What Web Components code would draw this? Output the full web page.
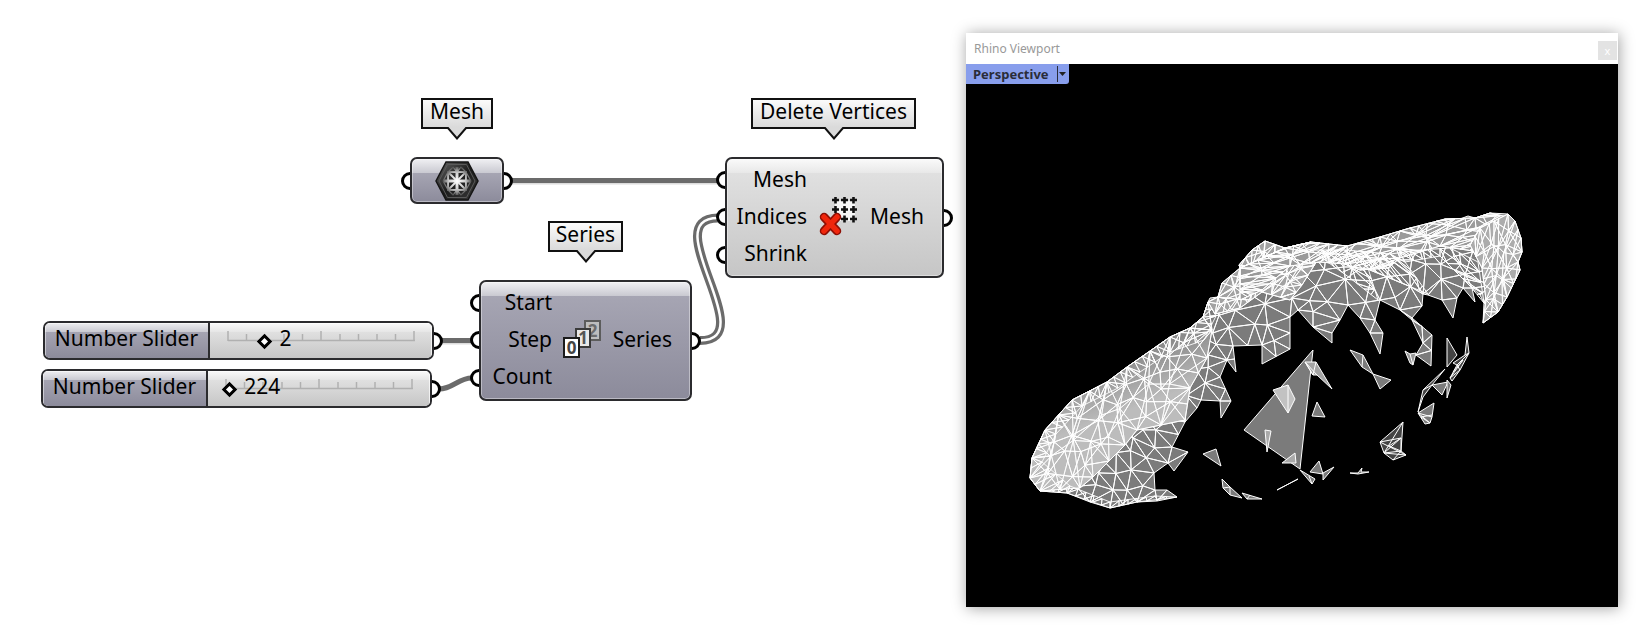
<!DOCTYPE html>
<html lang="en">
<head>
<meta charset="utf-8">
<title>Delete Vertices</title>
<style>
  html, body { height: 100%; margin: 0; background: #fff; }
  body { font-family: "Noto Sans", "Open Sans", sans-serif; color: #000; }
</style>
</head>
<body>
<gh-workspace>
  <gh-canvas slot="canvas">
    <gh-tag style="left:421px;top:98px;width:72px">Mesh</gh-tag>
    <gh-tag style="left:548px;top:221px;width:75px">Series</gh-tag>
    <gh-tag style="left:751px;top:98px;width:165px">Delete Vertices</gh-tag>
    <gh-node tone="violet" style="left:410px;top:157px;width:94px;height:47px" inputs=" " outputs=" " icon="mesh"></gh-node>
    <gh-node tone="grey" style="left:725px;top:157px;width:219px;height:121px" inputs="Mesh,Indices,Shrink" outputs="Mesh" icon="delete"></gh-node>
    <gh-node tone="violet" style="left:479px;top:280px;width:213px;height:121px" inputs="Start,Step,Count" outputs="Series" icon="series"></gh-node>
    <gh-slider style="left:43px;top:321px" label="Number Slider" value="2" max="10"></gh-slider>
    <gh-slider style="left:41px;top:369px" label="Number Slider" value="224" max="10000"></gh-slider>
  </gh-canvas>
  <rhino-viewport slot="viewport" heading="Rhino Viewport"><rhino-mesh></rhino-mesh></rhino-viewport>
</gh-workspace>

<script>
const define = (name, html, setup) => {
  const t = document.createElement('template');
  t.innerHTML = html;
  customElements.define(name, class extends HTMLElement {
    constructor() {
      super();
      this.attachShadow({ mode: 'open' }).append(t.content.cloneNode(true));
    }
    connectedCallback() { if (setup) setup.call(this, this.shadowRoot); }
  });
};

define('gh-workspace', `
<style>
  :host { display: block; }
  main { display: flex; align-items: flex-start; min-height: 100vh; box-sizing: border-box; padding-right: 28px; }
  .left { flex: 1 0 966px; align-self: stretch; }
  .right { flex: 0 1 652px; padding: 33px 0 24px; }
</style>
<main><div class="left"><slot name="canvas"></slot></div><div class="right"><slot name="viewport"></slot></div></main>`);

define('gh-canvas', `
<style>
  :host { display: block; position: relative; height: 100%; }
  svg { position: absolute; left: 0; top: 0; overflow: visible; }
  path { fill: none; }
</style>
<svg width="960" height="600" aria-hidden="true">
  <g stroke="#dcdcdc" stroke-width="5"><path d="M512 182H718"/><path d="M441 342H472"/></g>
  <g stroke="#6b6b6b" stroke-width="5">
    <path d="M512 180.5H718"/><path d="M441 340.5H472"/><path d="M439 389C453 389 458 378 472 378"/>
  </g>
  <path d="M700 340.5C763 340.5 655 218 718 218" stroke="#6b6b6b" stroke-width="9"/>
  <path d="M700 340.5C763 340.5 655 218 718 218" stroke="#fff" stroke-width="2.5"/>
</svg>
<slot></slot>`);

define('gh-tag', `
<style>
  :host { display: block; position: absolute; height: 42px; }
  .box { box-sizing: border-box; height: 31px; border: 2px solid #111; background: linear-gradient(#fbfbfb, #dadada);
    font-size: 21px; line-height: 22px; text-align: center; white-space: nowrap; }
  svg { display: block; margin: -2px auto 0; position: relative; }
</style>
<div class="box"><slot></slot></div>
<svg width="20" height="13" aria-hidden="true"><path d="M1 0V1L10 11.5L19 1V0Z" fill="#dadada"/><path d="M0 1H1L10 11.5L19 1H20" fill="none" stroke="#111" stroke-width="2"/></svg>`);

const ICONS = {
  mesh: `<svg width="44" height="40" viewBox="0 0 44 40" aria-hidden="true">
    <defs><linearGradient id="h" x1="0" y1="0" x2="1" y2="1"><stop offset="0" stop-color="#666"/><stop offset=".5" stop-color="#1c1c1c"/><stop offset="1" stop-color="#3a3a3a"/></linearGradient>
    <radialGradient id="g" gradientUnits="userSpaceOnUse" cx="22" cy="20" r="16"><stop offset="0" stop-color="#fff"/><stop offset=".5" stop-color="#d0d0d0"/><stop offset="1" stop-color="#333"/></radialGradient></defs>
    <path d="M11 1H33L43 20L33 39H11L1 20Z" fill="url(#h)" stroke="#151515" stroke-width="1.5"/>
    <path d="M12.5 3.5H31.5L40 20L31.5 36.5H12.5L4 20Z" fill="none" stroke="#5a5a5a"/>
    <g fill="none" stroke="url(#g)">
      <path d="M9 20H35M22 6V34" stroke-width="3"/>
      <path d="M13 11H31V29H13ZM13 11L31 29M31 11L13 29" stroke-width="2"/>
      <path d="M13 11L18 6L22 11L26 6L31 11M13 29L18 34L22 29L26 34L31 29M13 11L8 20L13 29M31 11L36 20L31 29" stroke-width="1.2"/>
    </g>
  </svg>`,
  delete: `<svg width="40" height="40" viewBox="0 0 40 40" aria-hidden="true">
    <rect x="16" y="4" width="20" height="20" fill="#f6f6f6"/>
    <path d="M13 3H20M22 3H29M31 3H38M13 12.5H20M22 12.5H29M31 12.5H38M13 22H20M22 22H29M31 22H38M16.5 0V6.500M25.500 0V6.500M34.500 0V6.500M16.500 9V16M25.500 9V16M34.500 9V16M16.500 18.500V25.500M25.500 18.500V25.500M34.500 18.500V25.500" stroke="#111" stroke-width="2.6"/>
    <path d="M5 20L18 34M18 20L5 34" stroke="#8e0f05" stroke-width="8.5" stroke-linecap="round"/>
    <path d="M5 20L18 34M18 20L5 34" stroke="#f0260c" stroke-width="5.5" stroke-linecap="round"/>
  </svg>`,
  series: `<svg width="40" height="40" viewBox="0 0 40 40" aria-hidden="true" font-family="Noto Sans, sans-serif" font-weight="700" font-size="17" text-anchor="middle" stroke-width="2">
    <rect x="23" y="1" width="15" height="19" fill="#bdbdbd" stroke="#5c5c5c"/><text x="30.5" y="17" fill="#6c6c6c">2</text>
    <rect x="14" y="9" width="14" height="18" fill="#e8e8e8" stroke="#3a3a3a"/><text x="21" y="24" fill="#555">1</text>
    <rect x="2" y="18" width="15" height="19" fill="#fff" stroke="#1b1b1b"/><text x="9.500" y="34" fill="#444">0</text>
  </svg>`
};

define('gh-node', `
<style>
  :host { display: block; position: absolute; }
  .grips { position: absolute; top: 4px; bottom: 4px; display: flex; flex-direction: column; justify-content: space-around; }
  .grips i { box-sizing: border-box; width: 18px; height: 18px; border: 3px solid #000; border-radius: 50%; background: #fff; }
  .in { left: -9px; } .out { right: -9px; }
  .body { box-sizing: border-box; position: relative; height: 100%; display: flex; align-items: center; justify-content: space-between;
    padding-bottom: 2px; border: 2px solid #2b2b2e; border-radius: 7px; box-shadow: inset 0 0 0 1px #ffffff66; font-size: 21px; }
  :host([tone=violet]) .body { background: linear-gradient(#f0f0f3, #c9c9d1 14px, #a6a5b3 14px, #8c8b9b); }
  :host([tone=grey]) .body { background: linear-gradient(#fafafa, #e8e8e8 14px, #e0e0e0 14px, #c6c6c6); }
  .col { display: flex; flex-direction: column; justify-content: space-around; height: 111px; }
  .col span { line-height: 37px; }
  .names { text-align: right; width: 80px; }
  .outs { padding-right: 18px; }
  svg { display: block; overflow: visible; }
  :host([icon=mesh]) .col { display: none; }
  :host([icon=mesh]) .body { justify-content: center; padding-bottom: 0; }
  :host([icon=series]) .names { width: 71px; }
</style>
<div class="grips in"></div><div class="grips out"></div>
<div class="body"><div class="col names"></div><div class="icon"></div><div class="col outs"></div></div>`,
function (root) {
  const fill = (grips, col, list) => list.split(',').forEach(name => {
    root.querySelector(grips).append(document.createElement('i'));
    if (!name.trim()) return;
    const s = document.createElement('span');
    s.textContent = name;
    root.querySelector(col).append(s);
  });
  fill('.in', '.names', this.getAttribute('inputs'));
  fill('.out', '.outs', this.getAttribute('outputs'));
  root.querySelector('.icon').innerHTML = ICONS[this.getAttribute('icon')];
});

define('gh-slider', `
<style>
  :host { display: block; position: absolute; width: 391px; height: 39px; }
  .grip { box-sizing: border-box; position: absolute; right: -9px; top: 11px; width: 18px; height: 18px; border: 3px solid #000; border-radius: 50%; background: #fff; }
  .bar { box-sizing: border-box; position: relative; height: 100%; display: flex; border: 2px solid #2b2b2e; border-radius: 7px; overflow: hidden; font-size: 21px; }
  label { box-sizing: border-box; width: 165px; border-right: 2px solid #2b2b2e; text-align: center; line-height: 30px; white-space: nowrap;
    background: linear-gradient(#eeeef1, #c9c9d1 9px, #a5a4b2 9px, #8c8b9b); box-shadow: inset 1px 1px 0 #ffffff80; }
  .field { flex: 1; display: flex; padding-left: 12px; background: linear-gradient(#fafafa, #e6e6e6 9px, #e0e0e0 9px, #c6c6c6); box-shadow: inset -1px 1px 0 #ffffffb0; }
  .track { position: relative; width: 198px; height: 35px; }
  svg { position: absolute; left: 5px; top: 0; }
  input { appearance: none; position: absolute; left: 0; top: 9px; margin: 0; width: 198px; height: 18px; background: none; outline: none; }
  input::-webkit-slider-thumb { appearance: none; box-sizing: border-box; width: 11px; height: 11px; border: 3px solid #000; background: #fff; transform: rotate(45deg); }
  output { position: absolute; top: 0; left: calc(20px + var(--at) * 187px); line-height: 30px; }
</style>
<span class="grip"></span>
<div class="bar"><label for="v"></label><div class="field"><div class="track">
  <svg width="190" height="35" fill="none" stroke="#b0b0b0" stroke-width="1.5" aria-hidden="true">
    <path d="M1 17.5H188"/><path d="M1 8V18M94 8V18M187 8V18M19.5 11V18M38 11V18M57 11V18M75.5 11V18M113 11V18M131.5 11V18M150 11V18M168.5 11V18"/>
  </svg>
  <input id="v" type="range" min="0"><output for="v"></output>
</div></div></div>`,
function (root) {
  root.querySelector('label').textContent = this.getAttribute('label');
  const input = root.querySelector('input'), out = root.querySelector('output');
  input.max = this.getAttribute('max');
  input.value = this.getAttribute('value');
  const show = () => { out.textContent = input.value; out.style.setProperty('--at', input.value / input.max); };
  input.addEventListener('input', show);
  show();
});

define('rhino-viewport', `
<style>
  :host { display: block; box-shadow: 1px 1px 14px #00000060; background: #fff; }
  header { display: flex; justify-content: space-between; align-items: center; height: 31px; padding: 0 1px 0 8px; color: #999; font-size: 12px; }
  .close { width: 19px; height: 19px; margin-top: 4px; padding: 0; border: 0; background: #e3e3e3; color: #fff; font: 11px/16px "Noto Sans", sans-serif; }
  .view { position: relative; background: #000; }
  .tab { position: absolute; left: 0; top: 0; display: flex; align-items: center; height: 20px; padding: 0 2px 0 7px; border: 0; border-bottom-right-radius: 3px;
    background: #889eec; color: #2a2c38; font: bold 13px/20px "Noto Sans", sans-serif; }
  .tab svg { margin-left: 8px; }
</style>
<header><span></span><button class="close" aria-label="Close">x</button></header>
<div class="view"><slot></slot>
<button class="tab">Perspective<svg width="10" height="16" aria-hidden="true"><path d="M.5 0V16" stroke="#2a2c38"/><path d="M2 6H9L5.5 10Z" fill="#222"/></svg></button></div>`,
function (root) { root.querySelector('header span').textContent = this.getAttribute('heading'); });

/* Small deterministic Delaunay mesher used for the shaded surface */
const random = seed => () => ((seed = (seed * 1664525 + 1013904223) >>> 0) / 4294967296);
const inside = (p, poly) => {
  let c = false;
  for (let i = 0, j = poly.length - 1; i < poly.length; j = i++) {
    const a = poly[i], b = poly[j];
    if ((a[1] > p[1]) !== (b[1] > p[1]) && p[0] < (b[0] - a[0]) * (p[1] - a[1]) / (b[1] - a[1]) + a[0]) c = !c;
  }
  return c;
};
const delaunay = pts => {
  const n = pts.length, P = pts.concat([[-9000, -9000], [12000, -9000], [1500, 15000]]);
  const circ = (i, j, k) => {
    const [ax, ay] = P[i], [bx, by] = P[j], [cx, cy] = P[k];
    const d = 2 * (ax * (by - cy) + bx * (cy - ay) + cx * (ay - by)) || 1e-9;
    const A = ax * ax + ay * ay, B = bx * bx + by * by, C = cx * cx + cy * cy;
    const x = (A * (by - cy) + B * (cy - ay) + C * (ay - by)) / d, y = (A * (cx - bx) + B * (ax - cx) + C * (bx - ax)) / d;
    return { i, j, k, x, y, r: (ax - x) ** 2 + (ay - y) ** 2 };
  };
  let T = [circ(n, n + 1, n + 2)];
  for (let p = 0; p < n; p++) {
    const edges = new Map(), keep = [];
    for (const t of T) {
      if ((P[p][0] - t.x) ** 2 + (P[p][1] - t.y) ** 2 < t.r) {
        for (const [a, b] of [[t.i, t.j], [t.j, t.k], [t.k, t.i]]) {
          const key = Math.min(a, b) + '_' + Math.max(a, b);
          edges.has(key) ? edges.set(key, null) : edges.set(key, [a, b]);
        }
      } else keep.push(t);
    }
    for (const e of edges.values()) if (e) keep.push(circ(e[0], e[1], p));
    T = keep;
  }
  return T.filter(t => t.i < n && t.j < n && t.k < n);
};
const parse = s => s.trim().split(/\s+/).map(p => p.split(',').map(Number));
/* Fills an outline with triangles; a looser spread gives a more irregular mesh */
const surface = (s, gap, angle, stretch, seed, spread = .6) => {
  const poly = parse(s), rnd = random(seed), pts = [];
  const ca = Math.cos(angle), sa = Math.sin(angle);
  const to = ([x, y]) => [(x * ca + y * sa) / stretch, -x * sa + y * ca];
  poly.forEach((a, i) => {
    const b = poly[(i + 1) % poly.length], m = Math.max(1, Math.round(Math.hypot(b[0] - a[0], b[1] - a[1]) / gap));
    for (let q = 0; q < m; q++) pts.push([a[0] + (b[0] - a[0]) * q / m, a[1] + (b[1] - a[1]) * q / m]);
  });
  const xs = poly.map(p => p[0]), ys = poly.map(p => p[1]);
  const x0 = Math.min(...xs), x1 = Math.max(...xs), y0 = Math.min(...ys), y1 = Math.max(...ys);
  const flat = pts.map(to);
  for (let q = 0; q < 3000; q++) {
    const p = [x0 + rnd() * (x1 - x0), y0 + rnd() * (y1 - y0)];
    if (!inside(p, poly)) continue;
    const f = to(p), g = gap * (spread + rnd() * .4);
    if (flat.every(o => (o[0] - f[0]) ** 2 + (o[1] - f[1]) ** 2 > g * g)) { pts.push(p); flat.push(f); }
  }
  const jit = flat.map(p => [p[0] + rnd() * .01, p[1] + rnd() * .01]);
  return delaunay(jit).map(t => [pts[t.i], pts[t.j], pts[t.k]])
    .filter(([a, b, c]) => inside([(a[0] + b[0] + c[0]) / 3, (a[1] + b[1] + c[1]) / 3], poly))
    .map(t => 'M' + t.map(p => p[0].toFixed(1) + ' ' + p[1].toFixed(1)).join('L') + 'Z').join('');
};

const BODY = `1030,478 1032,458 1045,430 1072,400 1107,382 1127,367 1150,351 1170,337 1190,328 1203,317 1208,302 1210,298 1218,297 1222,283 1227,283 1240,268 1239,265 1252,250 1265,241 1285,248 1297,246 1311,242 1327,245 1347,246 1362,244 1380,237 1410,228 1422,229 1445,219 1460,219 1468,216 1475,218 1490,213 1508,214 1515,221 1517,230 1521,238 1522,252 1518,262 1520,270 1507,297 1498,312 1483,323 1484,303 1480,295 1472,288 1475,302 1463,288 1457,298 1453,318 1442,300 1428,295 1423,294 1429,314 1422,306 1412,318 1432,335 1431,366 1416,355 1423,343 1412,320 1400,310 1380,300 1375,320 1383,333 1380,354 1370,333 1360,318 1348,305 1340,320 1332,333 1332,343 1313,327 1298,310 1290,317 1290,349 1262,364 1262,345 1233,346 1236,372 1227,360 1220,377 1231,401 1221,418 1220,401 1201,400 1197,408 1185,422 1172,447 1188,452 1174,471 1168,463 1154,473 1155,490 1167,490 1177,497 1157,501 1137,502 1110,508 1090,502 1067,493 1040,491`;
const FRONT = `1030,478 1032,458 1045,430 1072,400 1107,382 1127,367 1150,351 1170,337 1190,328 1203,317 1208,302 1212,330 1207,358 1190,388 1185,420 1137,430 1125,445 1093,477 1080,488 1040,491`;
const HEAD = `1480,228 1508,214 1515,221 1521,238 1522,252 1518,262 1520,270 1507,297 1498,312 1483,323 1486,300 1482,268 1470,245`;
const NECK = `1208,302 1218,297 1222,283 1240,268 1239,265 1252,250 1265,241 1285,248 1311,242 1320,256 1302,285 1290,300 1262,292 1240,308 1215,314`;
const RIM = `1030,478 1032,458 1045,430 1072,400 1107,382 1127,367 1150,351 1170,337 1190,328 1203,317 1208,302 1216,316 1204,340 1170,352 1140,372 1118,388 1082,406 1056,434 1042,462 1070,486 1110,502 1155,496 1177,497 1137,502 1110,508 1067,493 1040,491`;
const RIDGE = `1240,268 1285,248 1311,242 1347,246 1380,237 1410,228 1445,219 1475,218 1490,213 1512,218 1514,246 1480,252 1440,246 1400,258 1388,268 1360,270 1345,264 1320,262 1290,266 1262,290 1240,300`;
const FOLD = `1311,250 1345,250 1390,254 1420,250 1450,248 1478,262 1484,303 1470,286 1440,256 1405,262 1428,294 1385,276 1368,268 1378,300 1350,278`;
const ISLES = [
  ['1273,390 1288,385 1295,399 1288,413', '1288,385 1288,413', '#c2c2c2'],
  ['1305,362 1316,362 1332,389 1317,375 1313,375', '1316,362 1313,375 1305,362 1317,375', '#a5a5a5'],
  ['1317,402 1312,416 1325,417'], ['1265,430 1271,431 1267,452', '', '#aaa'], ['1282,463 1295,453 1296,463', '', '#aaa'],
  ['1300,470 1315,479 1312,484', '1309,476 1312,484'], ['1319,461 1310,472 1323,474'], ['1323,473 1334,467 1323,480'], ['1277,490 1298,479'],
  ['1222,479 1230,487 1242,498 1230,495 1223,488', '1223,488 1230,487 1230,495'], ['1242,493 1262,499 1247,499', '1247,499 1250,495'],
  ['1203,454 1216,449 1221,466'], ['1350,473 1358,473 1362,468 1361,472 1369,472 1358,474'],
  ['1350,350 1363,355 1373,374 1362,367', '1363,355 1362,367'], ['1373,374 1391,380 1380,389'],
  ['1405,351 1410,354 1416,353 1413,365 1410,363', '1410,354 1413,365', '#999'],
  ['1447,338 1457,355 1447,367', '', '#444'],
  ['1467,337 1469,353 1460,370 1452,381 1450,378 1457,365 1453,363 1465,355', '1465,355 1469,353 1457,365 1460,370 1450,378 1463,360 1453,372', '#444'],
  ['1445,369 1432,385 1423,397 1418,412 1423,390', '1423,390 1432,385', '#444'],
  ['1432,385 1448,382 1442,395'], ['1447,380 1451,385 1447,398'],
  ['1418,413 1434,403 1432,417 1430,423 1425,424', '1432,417 1418,413 1430,423 1421,417 1432,415'],
  ['1403,422 1380,442 1384,453 1393,460 1406,455 1401,451', '1403,422 1384,453 1401,438 1401,451 1384,453 1406,455 1380,442 1401,438 1389,446 1401,451 1393,460', '#444']
];

define('rhino-mesh', `
<style>
  :host { display: block; }
  svg { display: block; width: 100%; height: auto; }
</style>
<svg viewBox="966 64 652 543" role="img" aria-label="Shaded mesh" stroke="#fff" stroke-linejoin="round"></svg>`,
function (root) {
  const path = (d, fill, w) => `<path d="${d}" fill="${fill}" stroke-width="${w}"/>`;
  const line = s => 'M' + parse(s).map(p => p.join(' ')).join('L');
  let out = '<defs><linearGradient id="lit" gradientUnits="userSpaceOnUse" x1="1090" y1="370" x2="1120" y2="450"><stop offset="0" stop-color="#8a8a8a"/><stop offset=".6" stop-color="#bcbcbc"/></linearGradient></defs>';
  out += path(surface(BODY, 17, 0, 1, 7), '#7b7b7b', 1);
  out += path(surface(FRONT, 20, -.6, 1.2, 21), 'url(#lit)', 1);
  out += path(surface(FRONT, 26, -1.2, 1.6, 5), 'none', .8);
  out += path(surface(RIM, 9, -.6, 2.4, 3), 'none', .9);
  out += path(surface(NECK, 11, -.5, 1.5, 9), '#a2a2a2', 1);
  out += path(surface(NECK, 10, -.9, 2.2, 15), 'none', .9);
  out += path(surface(RIDGE, 9, -.12, 3, 11), '#9a9a9a', 1);
  out += path(surface(RIDGE, 10, -.3, 4, 12), 'none', 1);
  out += path(surface(FOLD, 10, .7, 4, 13), 'none', 1);
  out += path(surface(HEAD, 13, 1.4, 1.8, 17), '#acacac', 1);
  out += path(surface(HEAD, 11, 1.9, 2.8, 19), 'none', .9);
  out += path(line('1313,350 1244,430 1300,469') + 'Z', '#7b7b7b', 1);
  for (const [shape, inner, fill] of ISLES) {
    out += path(line(shape) + 'Z', fill || '#7b7b7b', 1);
    if (inner) out += path(line(inner), 'none', 1);
  }
  root.querySelector('svg').innerHTML = out;
});
</script>
</body>
</html>
